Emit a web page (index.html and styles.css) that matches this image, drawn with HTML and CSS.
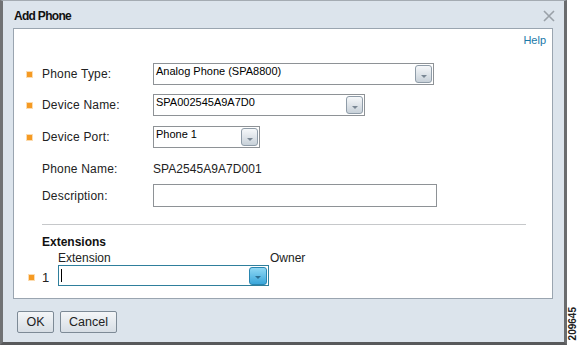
FILE: index.html
```html
<!DOCTYPE html>
<html lang="en">
<head>
  <meta charset="UTF-8">
  <title>Add Phone</title>
  <link rel="stylesheet" href="styles.css">
</head>
<body>
  <div class="page">
    <div class="dialog">
      <div class="titlebar">
        <span class="title">Add Phone</span>
        <svg class="close" width="12" height="12" viewBox="0 0 12 12">
          <path d="M1 1 L11 11 M11 1 L1 11" stroke="#9aa1a8" stroke-width="1.6" fill="none"/>
        </svg>
      </div>

      <div class="panel">
        <div class="help-line"><a class="help" href="#">Help</a></div>

        <div class="row">
          <span class="mark"></span>
          <span class="label">Phone Type:</span>
          <div class="select w-type"><span>Analog Phone (SPA8800)</span><span class="drop"></span></div>
        </div>

        <div class="row row-name">
          <span class="mark"></span>
          <span class="label">Device Name:</span>
          <div class="select w-name"><span>SPA002545A9A7D0</span><span class="drop"></span></div>
        </div>

        <div class="row row-port">
          <span class="mark"></span>
          <span class="label">Device Port:</span>
          <div class="select w-port"><span>Phone 1</span><span class="drop"></span></div>
        </div>

        <div class="row row-phone">
          <span class="mark blank"></span>
          <span class="label">Phone Name:</span>
          <span class="value">SPA2545A9A7D001</span>
        </div>

        <div class="row row-desc">
          <span class="mark blank"></span>
          <span class="label">Description:</span>
          <div class="input w-desc"></div>
        </div>

        <div class="sep"></div>

        <div class="ext-title">Extensions</div>
        <div class="ext-head">
          <span class="col-ext">Extension</span>
          <span class="col-owner">Owner</span>
        </div>
        <div class="ext-row">
          <span class="mark ext-mark"></span>
          <span class="num">1</span>
          <div class="combo"><span class="caret"></span><span class="drop blue"></span></div>
        </div>
      </div>

      <div class="footer">
        <button class="btn btn-ok">OK</button>
        <button class="btn btn-cancel">Cancel</button>
      </div>
    </div>
    <div class="stamp"><span>209645</span></div>
  </div>
</body>
</html>
```

FILE: styles.css
```css
body {
  margin: 0;
  background-color: white;
  font-family: "Liberation Sans", Arial, sans-serif;
  font-size: 12px;
  color: #222;
}
.page {
  display: flex;
  width: 579px;
  height: 347px;
}
.dialog {
  box-sizing: border-box;
  width: 567px;
  height: 345px;
  background-color: #dce4ec;
  border-top: 1px solid #a4abb2;
  border-left: 3px solid #707274;
  border-right: 3px solid #6a6c6e;
  border-bottom: 3px solid #58595b;
  display: flex;
  flex-direction: column;
}
.titlebar {
  height: 27px;
  box-sizing: border-box;
  padding: 8px 9px 0 11px;
  display: flex;
  justify-content: space-between;
  align-items: flex-start;
}
.title {
  font-weight: bold;
  font-size: 12px;
  line-height: 15px;
  letter-spacing: -0.7px;
  color: #111;
}
.close {
  margin-top: 1px;
}
.panel {
  box-sizing: border-box;
  height: 271px;
  margin: 0 11px 0 10px;
  background-color: white;
  border: 1px solid #9aa5b0;
}
.help-line {
  height: 20px;
  display: flex;
  justify-content: flex-end;
  align-items: center;
  padding-right: 6px;
}
.help {
  color: #1a78a8;
  font-size: 11px;
  text-decoration: none;
  margin-top: 2px;
}
.row {
  display: flex;
  align-items: center;
  height: 22px;
  margin-top: 14px;
}
.row-name {
  margin-top: 9px;
}
.row-port {
  margin-top: 10px;
}
.row-phone {
  margin-top: 10px;
}
.row-desc {
  margin-top: 4px;
  height: 23px;
}
.mark {
  width: 5px;
  height: 5px;
  margin: 0 10px 0 13px;
  background-color: #f59a23;
  box-shadow: 0 0 0 1px #fcdcb0;
}
.mark.blank {
  visibility: hidden;
}
.label {
  width: 111px;
  letter-spacing: 0.2px;
}
.value {
  letter-spacing: 0.05px;
}
.select {
  box-sizing: border-box;
  height: 22px;
  border: 1px solid #8e9296;
  display: flex;
  justify-content: space-between;
  align-items: flex-start;
  font-size: 11px;
  line-height: 13px;
  color: #000;
  padding: 1px 1px 0 2px;
}
.w-type { width: 281px; }
.w-name { width: 212px; }
.w-port { width: 107px; }
.drop {
  box-sizing: border-box;
  width: 17px;
  height: 18px;
  border: 1px solid #8f9ca8;
  border-radius: 3px;
  background: linear-gradient(#f6f8fa, #c8d1d9);
  display: flex;
  justify-content: center;
  align-items: center;
  padding-top: 4px;
}
.drop::after {
  content: "";
  border-left: 3px solid transparent;
  border-right: 3px solid transparent;
  border-top: 3px solid #7a8794;
}
.input {
  box-sizing: border-box;
  height: 23px;
  border: 1px solid #8e9296;
}
.w-desc { width: 284px; }
.sep {
  height: 1px;
  background-color: #c6c8ca;
  margin: 17px 26px 0 28px;
}
.ext-title {
  font-weight: bold;
  line-height: 14px;
  margin: 10px 0 0 28px;
  color: #111;
}
.ext-head {
  display: flex;
  line-height: 14px;
  margin-top: 2px;
  padding-left: 44px;
}
.col-ext {
  width: 212px;
}
.ext-row {
  display: flex;
  align-items: center;
  height: 21px;
}
.ext-mark {
  margin: 3px 8px 0 15px;
}
.num {
  width: 16px;
  font-size: 13px;
  padding-top: 4px;
}
.combo {
  box-sizing: border-box;
  width: 211px;
  height: 21px;
  border: 1px solid #2f7f9c;
  display: flex;
  justify-content: space-between;
  align-items: center;
  padding: 0 1px 0 2px;
}
.caret {
  width: 1px;
  height: 13px;
  background-color: #000;
}
.drop.blue {
  height: 18px;
  width: 18px;
  border-color: #2a86b0;
  background: linear-gradient(#8fd8f4, #3aa6da);
}
.drop.blue::after {
  border-top-color: #2b6f93;
}
.footer {
  display: flex;
  gap: 6px;
  padding: 12px 0 0 14px;
}
.btn {
  box-sizing: border-box;
  height: 22px;
  padding: 0;
  border: 1px solid #7d8a96;
  border-radius: 2px;
  background: linear-gradient(#f4f6f8, #d7dee5);
  font-family: "Liberation Sans", Arial, sans-serif;
  font-size: 12.5px;
  color: #222;
}
.btn-ok { width: 37px; }
.btn-cancel { width: 57px; }
.stamp {
  flex: 1;
  display: flex;
  flex-direction: column;
  justify-content: flex-end;
  align-items: center;
  padding-bottom: 7px;
}
.stamp span {
  writing-mode: vertical-rl;
  transform: rotate(180deg);
  font-size: 10px;
  font-weight: bold;
  line-height: 10px;
  color: #222;
}
```
